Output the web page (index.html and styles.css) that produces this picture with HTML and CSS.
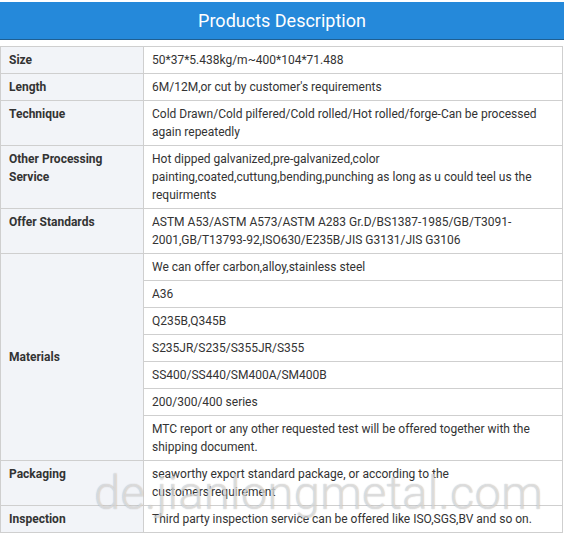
FILE: index.html
```html
<!DOCTYPE html>
<html>
<head>
<meta charset="utf-8">
<link rel="stylesheet" href="styles.css">
</head>
<body>
<div class="page">
  <div class="header">Products Description</div>
  <table class="spec">
    <tr><th>Size</th><td>50*37*5.438kg/m~400*104*71.488</td></tr>
    <tr><th>Length</th><td>6M/12M,or cut by customer's requirements</td></tr>
    <tr><th>Technique</th><td>Cold Drawn/Cold pilfered/Cold rolled/Hot rolled/forge-Can be processed again repeatedly</td></tr>
    <tr><th>Other Processing Service</th><td>Hot dipped galvanized,pre-galvanized,color painting,coated,cuttung,bending,punching as long as u could teel us the requirments</td></tr>
    <tr><th>Offer Standards</th><td>ASTM A53/ASTM A573/ASTM A283 Gr.D/BS1387-1985/GB/T3091-2001,GB/T13793-92,ISO630/E235B/JIS G3131/JIS G3106</td></tr>
    <tr><th rowspan="7" class="mid">Materials</th><td>We can offer carbon,alloy,stainless steel</td></tr>
    <tr><td>A36</td></tr>
    <tr><td>Q235B,Q345B</td></tr>
    <tr><td>S235JR/S235/S355JR/S355</td></tr>
    <tr><td>SS400/SS440/SM400A/SM400B</td></tr>
    <tr><td>200/300/400 series</td></tr>
    <tr><td>MTC report or any other requested test will be offered together with the shipping document.</td></tr>
    <tr><th>Packaging</th><td>seaworthy export standard package, or according to the customers'requirement</td></tr>
    <tr><th>Inspection</th><td>Third party inspection service can be offered like ISO,SGS,BV and so on.</td></tr>
  </table>
  <div class="watermark">de.jianlongmetal.com</div>
</div>
</body>
</html>
```

FILE: styles.css
```css
html, body {
  margin: 0;
  padding: 0;
  background: #fff;
}
.page {
  position: relative;
  width: 564px;
  padding-top: 2px;
  font-family: Roboto, "Liberation Sans", sans-serif;
}
.header {
  height: 37px;
  background: #2589da;
  border-bottom: 1px solid #1f5f92;
  color: #fff;
  font-size: 18px;
  line-height: 37px;
  text-align: center;
}
.spec {
  margin-top: 6px;
  width: 563px;
  border-collapse: collapse;
  font-size: 12px;
  line-height: 18px;
  color: #333;
}
.spec th, .spec td {
  border: 1px solid #cfcfcf;
  padding: 4px 8px 4px 8px;
  vertical-align: top;
  text-align: left;
}
.spec th {
  width: 126px;
  background: #f2f4f8;
  font-weight: bold;
  color: #333;
}
.spec th.mid {
  vertical-align: middle;
}
.watermark {
  position: absolute;
  left: 94px;
  top: 465px;
  font-family: Roboto, sans-serif;
  font-weight: 300;
  font-size: 47px;
  letter-spacing: 0.3px;
  color: rgba(255, 255, 255, 0.55);
  text-shadow: 0 0 1px rgba(120, 120, 120, 0.6);
  pointer-events: none;
}
```
